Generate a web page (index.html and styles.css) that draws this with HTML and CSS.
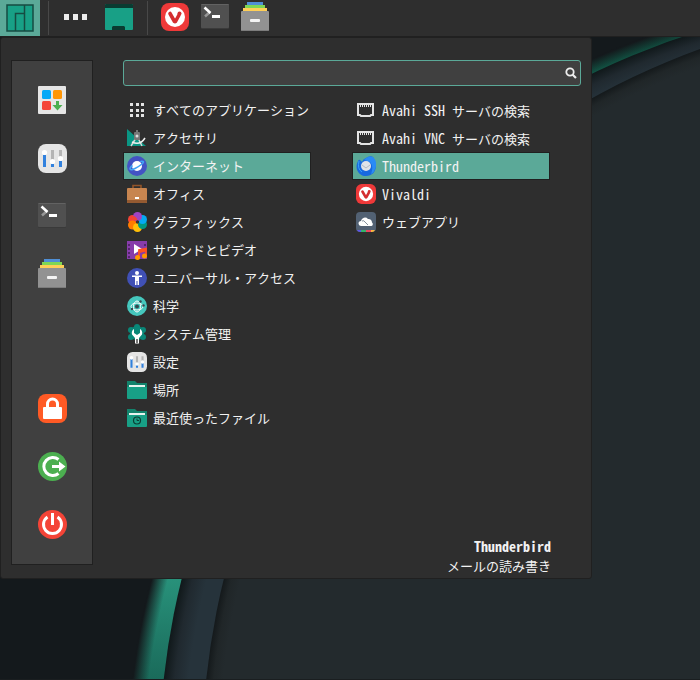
FILE: index.html
```html
<!DOCTYPE html>
<html lang="ja">
  <head>
    <meta charset="UTF-8" />
    <meta name="viewport" content="width=device-width, initial-scale=1.0" />
    <title>メニュー</title>
    <link rel="stylesheet" href="styles.css">
  </head>
  <body>

    <!-- shared icons -->
    <svg class="sprite" aria-hidden="true">
      <symbol id="vivaldi" viewBox="0 0 28 28">
        <rect width="28" height="28" rx="8" fill="#ef3939"/>
        <circle cx="14" cy="14" r="10" fill="#fff"/>
        <path d="M9 10.500L13.500 18.500Q14 19 14.500 18.500L18 12" fill="none" stroke="#d42e30" stroke-width="3.600" stroke-linecap="round" stroke-linejoin="round"/>
        <circle cx="18.500" cy="10.500" r="2" fill="#d42e30"/>
      </symbol>
      <symbol id="terminal" viewBox="0 0 30 30">
        <rect x="1" y="2" width="28" height="25" rx="1" fill="#3a3a3a"/>
        <rect x="1" y="2" width="28" height="24" rx="1" fill="#505050"/>
        <path d="M1.500 2.500h27" stroke="#626262"/>
        <path d="M5 14.500L10 10" stroke="#979797" stroke-width="2.500"/>
        <path d="M4.500 5.500L10.500 11" stroke="#fff" stroke-width="2.600"/>
        <rect x="12" y="13" width="8" height="3" fill="#fff"/>
      </symbol>
      <symbol id="files" viewBox="0 0 30 30">
        <rect x="7" y="0" width="16" height="4" fill="#4f8fd6"/>
        <rect x="5" y="3" width="20" height="4" fill="#7fd754"/>
        <rect x="3" y="6" width="24" height="5" fill="#ffcf57"/>
        <rect x="1" y="9" width="28" height="20" rx="1" fill="#929292"/>
        <path d="M2 28.500h26" stroke="#7c7c7c"/>
        <rect x="10" y="17" width="10" height="3" rx="1" fill="#f4f4f4"/>
      </symbol>
      <symbol id="settings" viewBox="0 0 29 29">
        <rect width="29" height="29" rx="8" fill="#e5e5e5"/>
        <path d="M14.500 6v12M22.500 6v9" stroke="#b4b4b4" stroke-width="3"/>
        <path d="M6.500 9v14M14.500 19v4M22.500 15v8" stroke="#3181de" stroke-width="3"/>
        <circle cx="6.500" cy="8.500" r="2.600" fill="#fff"/>
        <circle cx="14.500" cy="17.500" r="2.600" fill="#fff"/>
        <circle cx="22.500" cy="14.500" r="2.600" fill="#fff"/>
      </symbol>
      <symbol id="folder" viewBox="0 0 20 20">
        <path d="M0 1h8l2 2h10v8H0z" fill="#13836c"/>
        <rect x="2" y="5" width="16" height="3" fill="#e8f3ef"/>
        <path d="M0 7h20v11a1 1 0 0 1-1 1H1a1 1 0 0 1-1-1z" fill="#18a086"/>
      </symbol>
      <symbol id="ethernet" viewBox="0 0 20 20">
        <path d="M2 4h15v11h-2l-1 1H5l-1-1H2z" fill="none" stroke="#e4e4e4" stroke-width="2"/>
        <path d="M4.500 5v2M6.500 5v2M8.500 5v2M10.500 5v2M12.500 5v2M14.500 5v2" stroke="#e4e4e4"/>
      </symbol>
    </svg>

    <svg class="wallpaper" viewBox="0 0 700 680" preserveAspectRatio="xMinYMin slice" aria-hidden="true">
      <defs>
        <linearGradient id="green" gradientUnits="userSpaceOnUse" x1="0" y1="37" x2="0" y2="680">
          <stop offset="0" stop-color="#0f5c49"/>
          <stop offset=".82" stop-color="#2a977f"/>
          <stop offset="1" stop-color="#1a6a5a"/>
        </linearGradient>
        <radialGradient id="greenEdge" gradientUnits="userSpaceOnUse" cx="910" cy="775" r="783">
          <stop offset=".98" stop-color="#14191c" stop-opacity="0"/>
          <stop offset="1" stop-color="#14191c"/>
        </radialGradient>
        <radialGradient id="slate" gradientUnits="userSpaceOnUse" cx="926" cy="764" r="767">
          <stop offset=".968" stop-color="#26333b"/>
          <stop offset=".986" stop-color="#20292f"/>
          <stop offset="1" stop-color="#10181a"/>
        </radialGradient>
        <radialGradient id="inner" gradientUnits="userSpaceOnUse" cx="957" cy="759" r="755">
          <stop offset=".978" stop-color="#232a2d"/>
          <stop offset=".99" stop-color="#202628"/>
          <stop offset="1" stop-color="#14191b"/>
        </radialGradient>
      </defs>
      <circle cx="910" cy="775" r="783" fill="url(#green)"/>
      <circle cx="910" cy="775" r="784" fill="url(#greenEdge)"/>
      <circle cx="926" cy="764" r="767" fill="url(#slate)"/>
      <circle cx="957" cy="759" r="755" fill="url(#inner)"/>
    </svg>

    <nav class="panel" aria-label="パネル">
      <button class="panelButton active" aria-label="メニュー">
        <svg width="28" height="28" viewBox="0 0 28 28">
          <path d="M1 1h26v26H1z" fill="#18a086" stroke="#164b42" stroke-width="1.500"/>
          <path d="M18.500 1v26M18.500 9.500h-9V27" fill="none" stroke="#164b42" stroke-width="1.500"/>
        </svg>
      </button>
      <span class="separator"></span>
      <button class="panelButton more" aria-label="その他">
        <svg width="26" height="6" viewBox="0 0 26 6">
          <path d="M1 0h5v6H1zM10 0h5v6h-5zM19 0h5v6h-5z" fill="#ececec"/>
        </svg>
      </button>
      <button class="panelButton" aria-label="デスクトップを表示">
        <svg width="28" height="28" viewBox="0 0 28 28">
          <rect y="1" width="28" height="26" rx="1" fill="#18a086"/>
          <path d="M0 2a1 1 0 0 1 1-1h26a1 1 0 0 1 1 1v3H0zM7 27v-3l1-1h11l1 1v3z" fill="#0a3b31"/>
        </svg>
      </button>
      <span class="separator"></span>
      <button class="panelButton" aria-label="Vivaldi"><svg width="28" height="28"><use href="#vivaldi"/></svg></button>
      <button class="panelButton" aria-label="端末"><svg width="30" height="30"><use href="#terminal"/></svg></button>
      <button class="panelButton" aria-label="ファイル"><svg width="30" height="30"><use href="#files"/></svg></button>
    </nav>

    <main class="menu">

      <aside class="favorites">
        <div class="group">
          <button aria-label="ソフトウェアの追加と削除">
            <svg width="30" height="30" viewBox="0 0 30 30">
              <rect x="1" y="1" width="28" height="28" rx="1" fill="#e6e6e6"/>
              <rect x="5" y="5" width="9" height="9" rx="1.500" fill="#05a9f7"/>
              <rect x="16" y="5" width="9" height="9" rx="1.500" fill="#ff9606"/>
              <rect x="5" y="16" width="9" height="9" rx="1.500" fill="#f44437"/>
              <path d="M19 16h3v4h3.500l-5 5.500-5-5.500H19z" fill="#4caf50"/>
            </svg>
          </button>
          <button aria-label="設定"><svg width="29" height="29"><use href="#settings"/></svg></button>
          <button aria-label="端末"><svg width="30" height="30"><use href="#terminal"/></svg></button>
          <button aria-label="ファイル"><svg width="30" height="30"><use href="#files"/></svg></button>
        </div>
        <div class="group">
          <button aria-label="画面をロック">
            <svg width="29" height="29" viewBox="0 0 29 29">
              <rect width="29" height="29" rx="8" fill="#ff5a25"/>
              <path d="M9.500 14v-4a5 5 0 0 1 10 0v4" fill="none" stroke="#fff" stroke-width="3"/>
              <rect x="5" y="13" width="19" height="12" rx="1" fill="#fff"/>
            </svg>
          </button>
          <button aria-label="ログアウト">
            <svg width="29" height="29" viewBox="0 0 29 29">
              <circle cx="14.500" cy="14.500" r="14.500" fill="#4caf50"/>
              <path d="M20.500 7.500a9 9 0 1 0 0 14" fill="none" stroke="#fff" stroke-width="3"/>
              <path d="M14 13h7V9.500l6.500 5-6.500 5V16h-7z" fill="#fff"/>
            </svg>
          </button>
          <button aria-label="終了">
            <svg width="29" height="29" viewBox="0 0 29 29">
              <circle cx="14.500" cy="14.500" r="14.500" fill="#f44437"/>
              <path d="M9.500 7a9 9 0 1 0 10 0" fill="none" stroke="#fff" stroke-width="3"/>
              <path d="M14.500 3v12" stroke="#fff" stroke-width="3"/>
            </svg>
          </button>
        </div>
      </aside>

      <div class="content">
        <form class="search">
          <input type="text" aria-label="検索">
          <button aria-label="検索する">
            <svg width="12" height="12" viewBox="0 0 12 12">
              <circle cx="5" cy="5" r="3.700" fill="none" stroke="#ececec" stroke-width="1.800"/>
              <path d="M7.500 7.500l3.500 3.500" stroke="#ececec" stroke-width="2.200"/>
            </svg>
          </button>
        </form>

        <div class="columns">
          <ul class="list">
            <li><button class="item">
              <svg viewBox="0 0 20 20"><path d="M3 3h3v3H3zM9 3h3v3H9zM14 3h3v3h-3zM3 9h3v3H3zM9 9h3v3H9zM14 9h3v3h-3zM3 14h3v3H3zM9 14h3v3H9zM14 14h3v3h-3z" fill="#e4e4e4"/></svg>
              すべてのアプリケーション</button></li>
            <li><button class="item">
              <svg viewBox="0 0 20 20">
                <path d="M0 1l19 17H0z" fill="#0a9684"/>
                <path d="M9 10l-5 8M11 10l4 8" stroke="#d8d8d8" stroke-width="1.500"/>
                <path d="M5 14q8 4 13-4" fill="none" stroke="#f0f0f0" stroke-width="1.500"/>
                <rect x="7" y="4" width="6" height="8" rx="1" fill="#777"/>
                <rect x="9" y="2" width="2" height="3" fill="#777"/>
                <circle cx="10" cy="8" r="1.500" fill="#ddd"/>
              </svg>
              アクセサリ</button></li>
            <li><button class="item selected">
              <svg viewBox="0 0 20 20">
                <circle cx="10" cy="10" r="10" fill="#4353c4"/>
                <circle cx="10" cy="10" r="5" fill="#fff"/>
                <path d="M5.500 9.500C1 13 3 15 8 12.500S18 6 16 5.500s-2.500.5-2.500.5" fill="none" stroke="#42a5f5" stroke-width="1.600"/>
              </svg>
              インターネット</button></li>
            <li><button class="item">
              <svg viewBox="0 0 20 20">
                <path d="M6 5V1.500h8V5" fill="none" stroke="#925429" stroke-width="1.600"/>
                <rect y="4" width="20" height="15" rx="1" fill="#c78550"/>
                <path d="M0 16h20v2a1 1 0 0 1-1 1H1a1 1 0 0 1-1-1z" fill="#945a31"/>
                <rect x="8" y="13" width="4" height="2" fill="#fff"/>
              </svg>
              オフィス</button></li>
            <li><button class="item">
              <svg viewBox="0 0 20 20">
                <circle cx="5.500" cy="7.500" r="4.500" fill="#f44336"/>
                <circle cx="5.500" cy="13" r="4.500" fill="#ff7b00"/>
                <circle cx="10.500" cy="15.500" r="4.500" fill="#ffbf08"/>
                <circle cx="15.500" cy="12.500" r="4.500" fill="#009884"/>
                <circle cx="15.500" cy="7.500" r="4.500" fill="#05a9f4"/>
                <circle cx="10.500" cy="4.500" r="4.500" fill="#a044c4"/>
                <path d="M6 4q3 0 4.500 4Q6 9 3 6z" fill="#f44336"/>
                <circle cx="10.500" cy="10" r="1.700" fill="#343434"/>
              </svg>
              グラフィックス</button></li>
            <li><button class="item">
              <svg viewBox="0 0 20 20">
                <rect y="1" width="20" height="18" fill="#873caa"/>
                <path d="M2 4v14M18 4v5" stroke="#53256b" stroke-width="2" stroke-dasharray="2 2"/>
                <path d="M7 4l8 5-8 5z" fill="#fff"/>
                <path d="M12 17v-7l7-1.500V16M12 12l7-1.500" fill="none" stroke="#ff5122" stroke-width="1.800"/>
                <circle cx="10.500" cy="17.500" r="2.500" fill="#ff9800"/>
                <circle cx="17.500" cy="16" r="2.500" fill="#ff9800"/>
              </svg>
              サウンドとビデオ</button></li>
            <li><button class="item">
              <svg viewBox="0 0 20 20">
                <circle cx="10" cy="10" r="10" fill="#4050b5"/>
                <circle cx="10" cy="5" r="2" fill="#fff"/>
                <path d="M5 7.500h10V9h-3v8h-1.500v-4h-1v4H8V9H5z" fill="#fff"/>
              </svg>
              ユニバーサル・アクセス</button></li>
            <li><button class="item">
              <svg viewBox="0 0 20 20">
                <circle cx="10" cy="10" r="10" fill="#45c7bd"/>
                <ellipse cx="10" cy="10.500" rx="6" ry="3.500" fill="none" stroke="#fff"/>
                <ellipse cx="10" cy="10.500" rx="3.500" ry="5.500" fill="none" stroke="#fff"/>
                <circle cx="10" cy="10.500" r="2" fill="#37474f"/>
                <circle cx="13.500" cy="5.500" r="1.200" fill="#37474f"/>
                <circle cx="16.500" cy="9.500" r="1.200" fill="#37474f"/>
                <circle cx="5" cy="13" r="1.200" fill="#37474f"/>
              </svg>
              科学</button></li>
            <li><button class="item">
              <svg viewBox="0 0 20 20">
                <g fill="#098778">
                  <circle cx="10" cy="9" r="7"/>
                  <circle cx="10" cy="3" r="3"/><circle cx="4" cy="6" r="3"/><circle cx="16" cy="6" r="3"/>
                  <circle cx="4" cy="13" r="3"/><circle cx="16" cy="13" r="3"/>
                </g>
                <path d="M7 5v4l3 2 3-2V5q3 2 2 5.500L12 14v5.500H8V14l-3-3.500Q4 7 7 5z" fill="#fff"/>
                <rect x="9" y="15" width="2" height="4" fill="#777"/>
              </svg>
              システム管理</button></li>
            <li><button class="item"><svg><use href="#settings"/></svg>設定</button></li>
            <li><button class="item"><svg><use href="#folder"/></svg>場所</button></li>
            <li><button class="item">
              <svg viewBox="0 0 20 20">
                <use href="#folder"/>
                <circle cx="10" cy="12.500" r="3.500" fill="none" stroke="#0b3d33" stroke-width="1.200"/>
                <path d="M10 10.500v2h2" fill="none" stroke="#0b3d33"/>
              </svg>
              最近使ったファイル</button></li>
          </ul>

          <ul class="list">
            <li><button class="item"><svg><use href="#ethernet"/></svg><span><span class="latin">Avahi SSH </span>サーバの検索</span></button></li>
            <li><button class="item"><svg><use href="#ethernet"/></svg><span><span class="latin">Avahi VNC </span>サーバの検索</span></button></li>
            <li><button class="item selected">
              <svg viewBox="0 0 20 20">
                <path d="M2 5C-2 13 3 20 10 20s11-6 9.500-12Q19 4 17 1q-3-2-7 1Q7 3 6 6L4 4Q3 3 2 5z" fill="#1769df"/>
                <path d="M8 4q4-5 9-3 5 5 2 12-1 4-4 5 3-8-1-12z" fill="#2a8bf5"/>
                <path d="M3 5q-2 8 3 11" fill="none" stroke="#38a4fb"/>
                <circle cx="10" cy="10" r="5" fill="#dfe2e8"/>
                <path d="M6 9l4 3 4-3" fill="none" stroke="#b3bac5"/>
              </svg>
              <span class="latin">Thunderbird</span></button></li>
            <li><button class="item"><svg><use href="#vivaldi"/></svg><span class="latin">Vivaldi</span></button></li>
            <li><button class="item">
              <svg viewBox="0 0 20 20">
                <rect width="20" height="20" rx="4" fill="#526173"/>
                <path d="M1 18h5v2H4q-2 0-3-2z" fill="#5c55e8"/>
                <path d="M5 18h5v2H5z" fill="#34b36b"/>
                <path d="M10 18h5v2h-5z" fill="#ea4560"/>
                <path d="M15 18h4q-1 2-3 2h-1z" fill="#fbb63b"/>
                <path d="M5 14a2.500 2.500 0 0 1 0-5 4 4 0 0 1 7-2 3.500 3.500 0 0 1 4 3.500 2 2 0 0 1-.5 3.500z" fill="#fff"/>
                <path d="M6 9q2-1 3 1l3 3" fill="none" stroke="#526173" stroke-width=".7"/>
              </svg>
              ウェブアプリ</button></li>
          </ul>
        </div>

        <div class="description">
          <strong class="latin">Thunderbird</strong>
          <span>メールの読み書き</span>
        </div>
      </div>

    </main>
  </body>
</html>
```
FILE: styles.css
```css
* {
  box-sizing: border-box;
}

body {
  margin: 0;
  min-height: 100vh;
  background: #14191c;
  color: #f2f2f2;
  font-family: "Noto Sans Mono CJK JP", "Noto Sans CJK JP", sans-serif;
  font-size: 13px;
  line-height: 20px;
}

button,
input {
  margin: 0;
  padding: 0;
  border: 0;
  background: none;
  color: inherit;
  font: inherit;
}

button {
  cursor: pointer;
}

svg {
  display: block;
}

.sprite {
  position: absolute;
  width: 0;
  height: 0;
}

.wallpaper {
  position: fixed;
  top: 0;
  left: 0;
  z-index: -1;
  width: 100%;
  height: 100%;
  border-bottom: 1px solid #1a1e20;
}

.latin {
  font-size: 14px;
  white-space: pre;
}

/* top panel */
.panel {
  display: flex;
  height: 37px;
  background: #2e2e2e;
  border-bottom: 1px solid #202020;
}

.panelButton {
  display: flex;
  align-items: center;
  justify-content: center;
  width: 40px;
  padding-bottom: 2px;
}

.panelButton.active {
  padding-bottom: 0;
  background: #5ba998;
}

.panelButton.more {
  margin-right: 3px;
}

.separator {
  width: 1px;
  margin: 1px 7px 1px 8px;
  background: #484848;
}

/* menu */
.menu {
  display: flex;
  max-width: 592px;
  background: #2e2e2e;
  border: 1px solid #202020;
  border-radius: 3px;
}

.favorites {
  display: flex;
  flex-direction: column;
  gap: 76px;
  flex: none;
  width: 82px;
  margin: 22px 0 13px 10px;
  padding: 10px 0 11px;
  background: #404040;
  border: 1px solid #202020;
}

.group button {
  display: flex;
  align-items: center;
  justify-content: center;
  width: 100%;
  height: 58px;
}

.content {
  display: flex;
  flex-direction: column;
  flex: 1;
  min-width: 0;
  padding: 22px 10px 2px 30px;
}

.search {
  display: flex;
  align-items: center;
  height: 26px;
  padding: 0 3px 0 6px;
  background: #404040;
  border: 1px solid #5ba998;
  border-radius: 3px;
}

.search input {
  flex: 1;
  min-width: 0;
  outline: none;
}

.columns {
  display: flex;
  gap: 41px;
  margin-top: 10px;
}

.list {
  flex: 0 1 188px;
  margin: 0;
  padding: 0;
  list-style: none;
}

.list + .list {
  flex-basis: 198px;
}

.item {
  display: flex;
  align-items: center;
  gap: 6px;
  width: 100%;
  height: 28px;
  padding: 0 0 0 3px;
  border: 1px solid transparent;
  text-align: left;
  white-space: nowrap;
}

.item svg {
  flex: none;
  width: 20px;
  height: 20px;
}

.item.selected {
  background: #5ba998;
  border-color: #202020;
}

.description {
  display: flex;
  flex-direction: column;
  margin-top: auto;
  padding-right: 30px;
  text-align: right;
}
```
